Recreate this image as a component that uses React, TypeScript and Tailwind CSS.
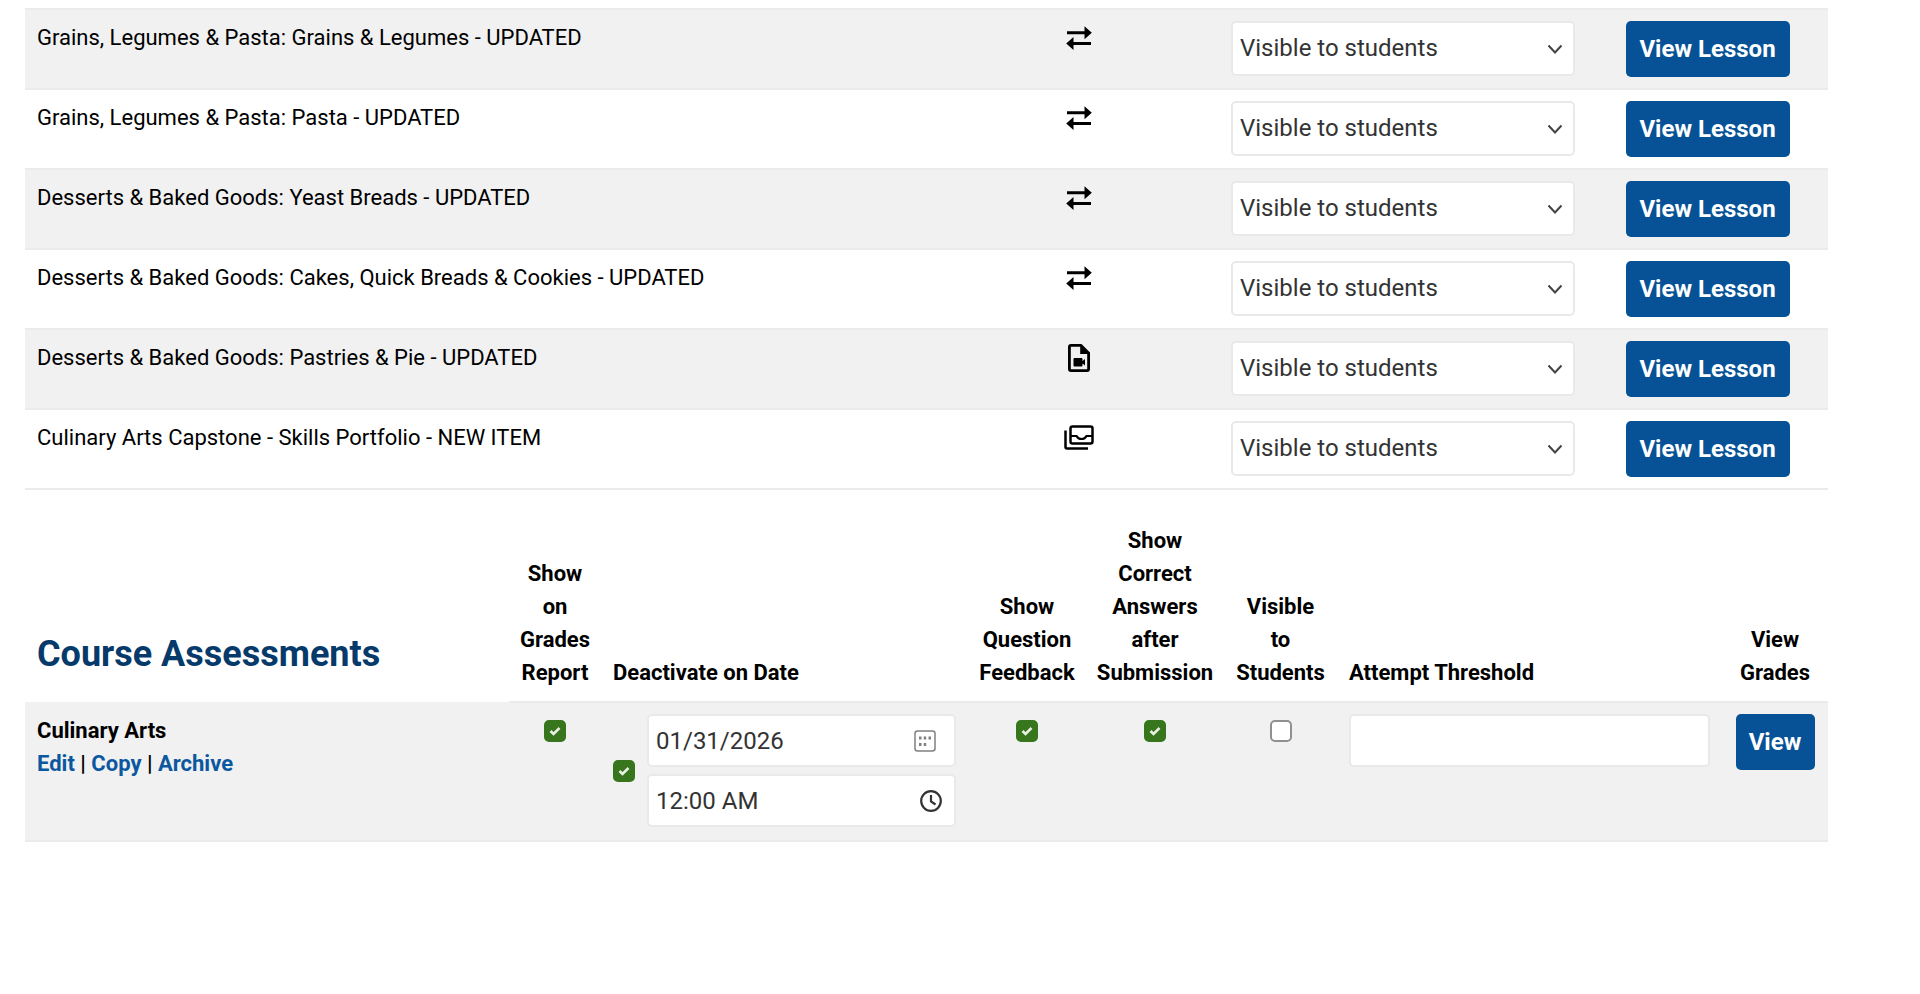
import React from "react";

const lessons = [
  { title: "Grains, Legumes & Pasta: Grains & Legumes - UPDATED", kind: "sync" },
  { title: "Grains, Legumes & Pasta: Pasta - UPDATED", kind: "sync" },
  { title: "Desserts & Baked Goods: Yeast Breads - UPDATED", kind: "sync" },
  { title: "Desserts & Baked Goods: Cakes, Quick Breads & Cookies - UPDATED", kind: "sync" },
  { title: "Desserts & Baked Goods: Pastries & Pie - UPDATED", kind: "video" },
  { title: "Culinary Arts Capstone - Skills Portfolio - NEW ITEM", kind: "portfolio" },
];

function SyncIcon() {
  return (
    <svg width="26" height="24" viewBox="0 0 26 24" fill="currentColor" aria-hidden="true">
      <path d="M1 5.300h17.500V0.300L25.800 6.800l-7.300 6.500V8.300H1z" />
      <path d="M25 19H7.500v5L0.200 17.500 7.500 11v5H25z" />
    </svg>
  );
}

function VideoFileIcon() {
  return (
    <svg width="22" height="28" viewBox="0 0 22 28" fill="currentColor" aria-hidden="true">
      <path
        fillRule="evenodd"
        d="M3 0h10.500L22 8.500V25a3 3 0 0 1-3 3H3a3 3 0 0 1-3-3V3a3 3 0 0 1 3-3zM2.800 2.800v22.400h16.400V10h-7V2.800z"
      />
      <path d="M6.500 14h7a1 1 0 0 1 1 1v2l2.500-2v6.500l-2.500-2v2a1 1 0 0 1-1 1h-7a1 1 0 0 1-1-1V15a1 1 0 0 1 1-1z" />
    </svg>
  );
}

function PortfolioIcon() {
  return (
    <svg width="30" height="25" viewBox="0 0 30 25" fill="none" stroke="currentColor" strokeWidth="2.500" aria-hidden="true">
      <rect x="6.500" y="1.500" width="22" height="17" rx="2" />
      <path d="M1.500 5.500V22q0 1.500 1.500 1.500H24" />
      <path d="M6.500 11h6q1.500 3 5 3t5-3h6" strokeWidth="2.200" />
    </svg>
  );
}

function KindIcon({ kind }: { kind: string }) {
  if (kind === "sync") return <SyncIcon />;
  if (kind === "video") return <VideoFileIcon />;
  return <PortfolioIcon />;
}

const field =
  "block w-full appearance-none rounded-[5px] border-2 border-[#e9e9e9] bg-white pl-[7px] font-normal text-[24px] text-[#333]";

const button = "h-[56px] rounded-[5px] bg-[#075297] text-[24px] font-bold text-white";

function Check({ label, checked }: { label: string; checked?: boolean }) {
  return (
    <span className="grid size-[22px] shrink-0 grid-cols-1 grid-rows-1">
      <input
        type="checkbox"
        aria-label={label}
        defaultChecked={checked}
        className="peer col-start-1 row-start-1 size-[22px] appearance-none rounded-[5px] border-2 border-[#909090] bg-white checked:border-[#38761d] checked:bg-[#38761d]"
      />
      <svg
        viewBox="0 0 22 22"
        fill="none"
        stroke="#e9f0e6"
        strokeWidth="2.600"
        className="pointer-events-none col-start-1 row-start-1 hidden size-[22px] peer-checked:block"
        aria-hidden="true"
      >
        <path d="M6.500 11l3 3L15.500 8" />
      </svg>
    </span>
  );
}

function HeadLines({ lines }: { lines: string[] }) {
  return (
    <>
      {lines.map((l) => (
        <span key={l} className="block">
          {l}
        </span>
      ))}
    </>
  );
}

const headCell = "border-b-2 border-[#ebebeb] px-3 pb-3 align-bottom";
const centredHeadCell = "border-b-2 border-[#ebebeb] px-2 pb-3 align-bottom";

export default function App() {
  return (
    <main className="min-h-screen bg-white pt-2 pr-[92px] pl-[25px] font-[Roboto,sans-serif] text-[22px] leading-[33px] text-black">
      <table className="w-full table-fixed border-collapse border-t-2 border-[#ebebeb]">
        <colgroup>
          <col />
          <col className="w-[280px]" />
          <col className="w-[368px]" />
          <col className="w-[241px]" />
        </colgroup>
        <tbody>
          {lessons.map((l) => (
            <tr key={l.title} className="h-20 border-b-2 border-[#ebebeb] align-top odd:bg-[#f1f1f1]">
              <td className="px-3 pt-[11px]">{l.title}</td>
              <td className="pt-[11px]">
                <span className="flex h-[33px] items-center justify-center">
                  <KindIcon kind={l.kind} />
                </span>
              </td>
              <td className="px-3 pt-[11px]">
                <div className="grid items-center">
                  <select
                    aria-label={"Visibility of " + l.title}
                    className={field + " col-start-1 row-start-1 h-[55px]"}
                  >
                    <option>Visible to students</option>
                    <option>Hidden from students</option>
                  </select>
                  <svg
                    viewBox="0 0 16 16"
                    className="pointer-events-none col-start-1 row-start-1 mr-3 size-4 justify-self-end"
                    fill="none"
                    stroke="#444"
                    strokeWidth="2"
                    aria-hidden="true"
                  >
                    <path d="M1.500 4.500L8 11.500l6.500-7" />
                  </svg>
                </div>
              </td>
              <td className="pt-[11px] text-center">
                <button className={button + " w-[164px]"}>View Lesson</button>
              </td>
            </tr>
          ))}
        </tbody>
      </table>

      <table className="mt-[34px] w-full table-fixed border-collapse font-bold">
        <colgroup>
          <col />
          <col className="w-[92px]" />
          <col className="w-[367px]" />
          <col className="w-[118px]" />
          <col className="w-[138px]" />
          <col className="w-[113px]" />
          <col className="w-[385px]" />
          <col className="w-[106px]" />
        </colgroup>
        <thead>
          <tr>
            <td className="px-3 pb-6 align-bottom">
              <h2 className="text-[36px] leading-[48px] font-bold text-[#063a6b]">Course Assessments</h2>
            </td>
            <th scope="col" className={centredHeadCell}>
              <HeadLines lines={["Show", "on", "Grades", "Report"]} />
            </th>
            <th scope="col" className={headCell + " text-left"}>
              Deactivate on Date
            </th>
            <th scope="col" className={centredHeadCell}>
              <HeadLines lines={["Show", "Question", "Feedback"]} />
            </th>
            <th scope="col" className={centredHeadCell}>
              <HeadLines lines={["Show", "Correct", "Answers", "after", "Submission"]} />
            </th>
            <th scope="col" className={centredHeadCell}>
              <HeadLines lines={["Visible", "to", "Students"]} />
            </th>
            <th scope="col" className={headCell + " text-left"}>
              Attempt Threshold
            </th>
            <th scope="col" className={centredHeadCell}>
              <HeadLines lines={["View", "Grades"]} />
            </th>
          </tr>
        </thead>
        <tbody>
          <tr className="border-b-2 border-[#ebebeb] bg-[#f1f1f1] align-top">
            <td className="px-3 pt-3">
              <div>Culinary Arts</div>
              <div>
                <a href="#edit" className="text-[#0b58a0]">Edit</a> | <a href="#copy" className="text-[#0b58a0]">Copy</a> |{" "}
                <a href="#archive" className="text-[#0b58a0]">Archive</a>
              </div>
            </td>
            <td className="pt-[17px]">
              <span className="flex justify-center">
                <Check label="Show on grades report" checked />
              </span>
            </td>
            <td className="px-3 pt-[11px] pb-[13px]">
              <div className="flex items-center gap-3">
                <Check label="Deactivate on date" checked />
                <div className="grid grow gap-[7px]">
                  <div className="grid items-center">
                    <input
                      aria-label="Deactivation date"
                      defaultValue="01/31/2026"
                      className={field + " col-start-1 row-start-1 h-[53px]"}
                    />
                    <svg
                      viewBox="0 0 22 22"
                      className="pointer-events-none col-start-1 row-start-1 mr-5 size-[22px] justify-self-end"
                      fill="none"
                      stroke="#808080"
                      strokeWidth="1.500"
                      aria-hidden="true"
                    >
                      <rect x="1" y="1" width="20" height="20" rx="2.500" />
                      <path d="M5 8h2.500M9.700 8h2.500M14.500 8h2.500M5 14.500h2.500M9.700 14.500h2.500" strokeWidth="3" />
                    </svg>
                  </div>
                  <div className="grid items-center">
                    <input
                      aria-label="Deactivation time"
                      defaultValue="12:00 AM"
                      className={field + " col-start-1 row-start-1 h-[53px]"}
                    />
                    <svg
                      viewBox="0 0 22 22"
                      className="pointer-events-none col-start-1 row-start-1 mr-[14px] size-[22px] justify-self-end"
                      fill="none"
                      stroke="#333"
                      strokeWidth="2.200"
                      aria-hidden="true"
                    >
                      <circle cx="11" cy="11" r="9.800" />
                      <path d="M11 5v6.500l4.500 3" />
                    </svg>
                  </div>
                </div>
              </div>
            </td>
            <td className="pt-[17px]">
              <span className="flex justify-center">
                <Check label="Show question feedback" checked />
              </span>
            </td>
            <td className="pt-[17px]">
              <span className="flex justify-center">
                <Check label="Show correct answers after submission" checked />
              </span>
            </td>
            <td className="pt-[17px]">
              <span className="flex justify-center">
                <Check label="Visible to students" />
              </span>
            </td>
            <td className="px-3 pt-[11px]">
              <input aria-label="Attempt threshold" className={field + " h-[53px]"} />
            </td>
            <td className="pt-[11px] text-center">
              <button className={button + " w-[79px]"}>View</button>
            </td>
          </tr>
        </tbody>
      </table>
    </main>
  );
}
